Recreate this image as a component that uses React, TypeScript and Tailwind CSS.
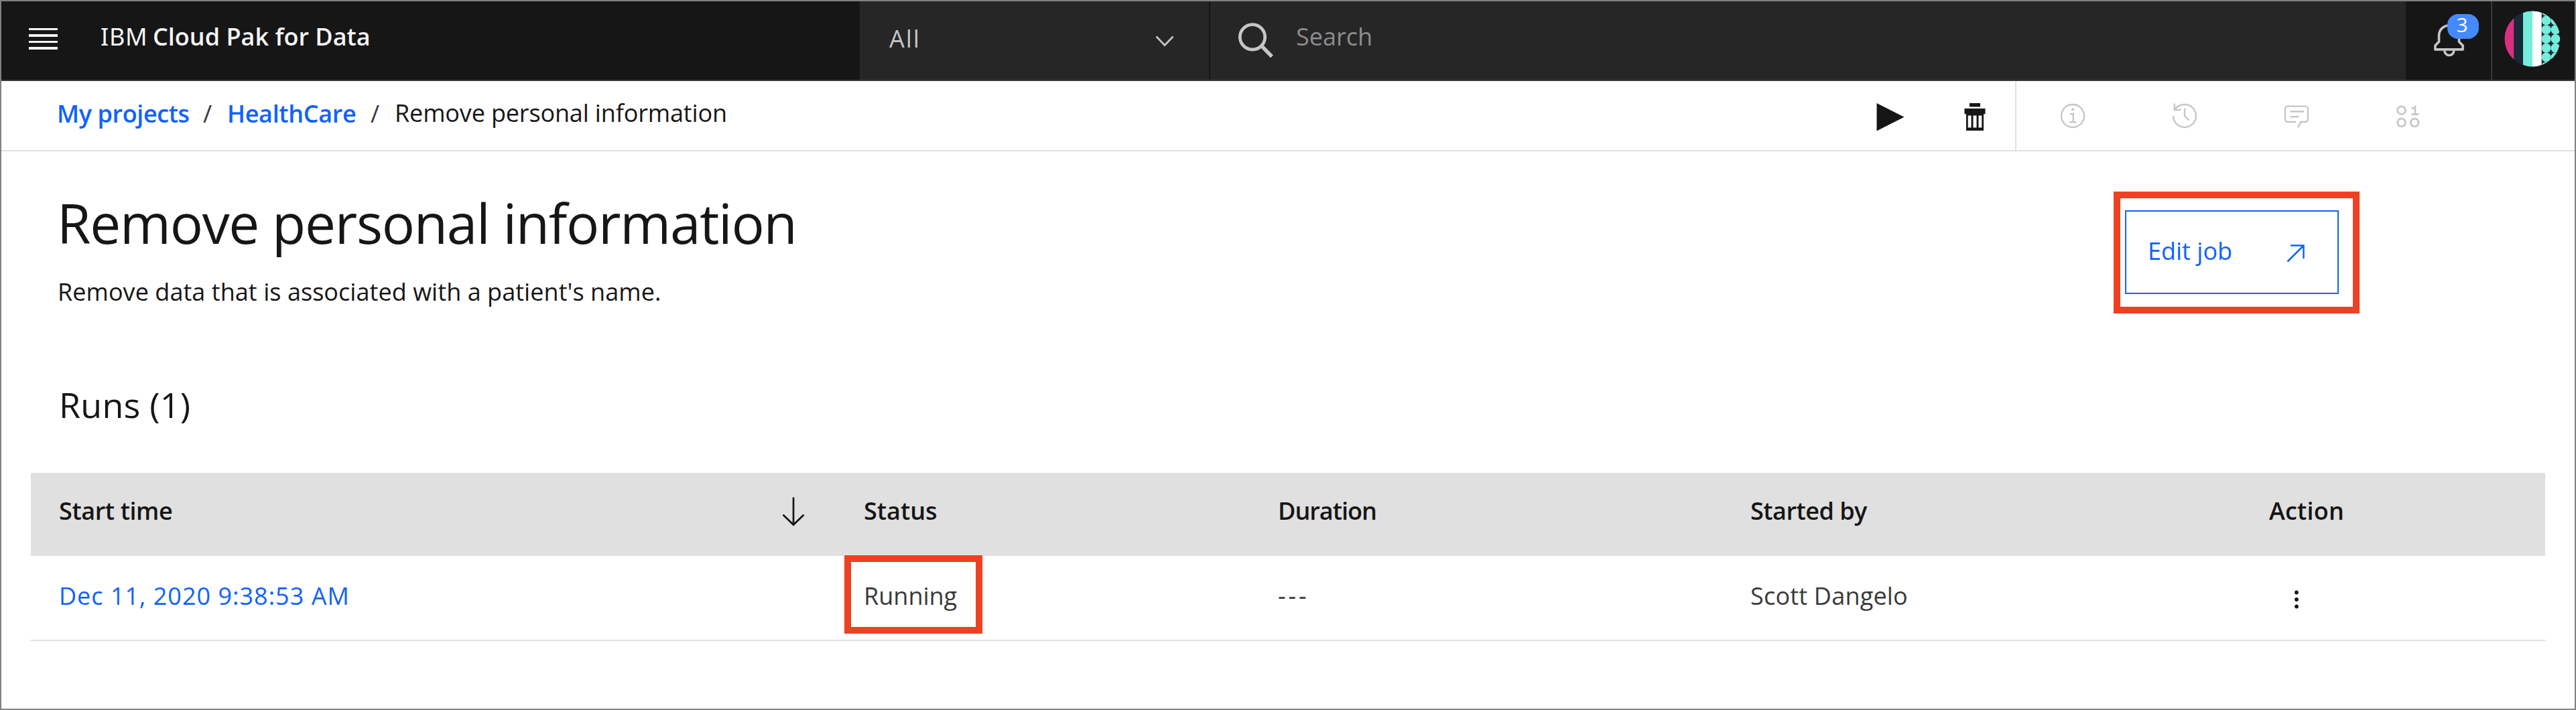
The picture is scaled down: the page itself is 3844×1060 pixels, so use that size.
import React from 'react';

function SearchIcon() {
  return (
    <svg width="56" height="56" viewBox="0 0 56 56" fill="none" stroke="#c6c6c6" className="shrink-0">
      <circle cx="25" cy="25.3" r="18.7" strokeWidth="4.8" />
      <path d="M39 39l15 15.5" strokeWidth="5.4" />
    </svg>
  );
}

function BellIcon() {
  return (
    <svg width="46" height="50" viewBox="0 0 46 50" fill="none" stroke="#c6c6c6" strokeWidth="3.6">
      <path d="M1.9 37.9V32l5.6-5.8v-9.2a15 15 0 0 1 30 0v9.2l5.6 5.8v5.9z" strokeLinejoin="round" />
      <path d="M15.8 39.5a7 7 0 0 0 14 0" />
    </svg>
  );
}

function Avatar() {
  const rows = [-41.2, -27.4, -13.7, 0, 13.7, 27.4, 41.2];
  return (
    <svg width="84" height="84" viewBox="-42 -42 84 84">
      <clipPath id="avatar">
        <circle r="41.5" />
      </clipPath>
      <g clipPath="url(#avatar)">
        <rect x="-42" y="-42" width="84" height="84" fill="#182a38" />
        <rect x="-42" y="-42" width="14.2" height="84" fill="#da2f80" />
        <rect x="-14" y="-42" width="14" height="84" fill="#76eddb" />
        <rect x="0" y="-42" width="13.7" height="84" fill="#fff" />
        {rows.map((y) => (
          <g key={y} fill="#76eddb">
            <circle cx="20.6" cy={y} r="7" />
            <circle cx="34.4" cy={y} r="7" />
          </g>
        ))}
      </g>
    </svg>
  );
}

function TrashIcon() {
  return (
    <svg width="32" height="42" viewBox="0 0 32 42" fill="#161616">
      <path d="M8 0h16v5.5H8zM.5 8h31v8.300h-31z" />
      <path fillRule="evenodd" d="M3 16h26v25H3zM5.700 18.500v18h4.800v-18zM13.500 18.500v18h5v-18zM21.500 18.500v18h4.800v-18z" />
    </svg>
  );
}

const toolIcon = { width: 40, height: 40, viewBox: '0 0 40 40', fill: 'none', stroke: '#c6c6c6', strokeWidth: 2.4 };

function InfoIcon() {
  return (
    <svg {...toolIcon}>
      <circle cx="20" cy="20" r="17" />
      <circle cx="20" cy="10.500" r="2.100" fill="#c6c6c6" stroke="none" />
      <path d="M16 17h4.800v12M15 29.200h10.200" />
    </svg>
  );
}

function HistoryIcon() {
  return (
    <svg {...toolIcon}>
      <path d="M3 20a17 17 0 1 0 17-17C13.500 3 8 6 5 11M4.700 1.500V11h9.800M20 8.500V20l6.500 6.500" />
    </svg>
  );
}

function CommentIcon() {
  return (
    <svg {...toolIcon}>
      <path d="M19 29H7a4 4 0 0 1-4-4V9.600a4 4 0 0 1 4-4h26a4 4 0 0 1 4 4V25a4 4 0 0 1-4 4h-6.500L22 37.300M10.500 13.500h20.500M10.500 21.200h13" />
    </svg>
  );
}

function DataIcon() {
  return (
    <svg {...toolIcon} strokeWidth="2.700">
      <circle cx="9.500" cy="11.700" r="5.900" />
      <circle cx="9.500" cy="30" r="5.900" />
      <circle cx="29.200" cy="30" r="5.900" />
      <path d="M24.500 8.500h5.500M30 4.500v13.500M24.500 17.700h11" />
    </svg>
  );
}

export default function App() {
  return (
    <div className="flex h-[1060px] w-[3844px] flex-col border-2 border-[#808080] bg-white font-['Open_Sans','Noto_Sans',sans-serif] text-[36px] leading-none whitespace-nowrap text-[#161616]">
      <header className="flex h-[119px] shrink-0 border-b-2 border-[#393939] bg-[#161616]">
        <div className="flex w-[1281px] items-center pb-[11px] pl-[41px]">
          <div className="mt-[5px] flex w-[43px] flex-col gap-[6px]">
            <div className="h-[3.5px] bg-[#f4f4f4]" />
            <div className="h-[3.5px] bg-[#f4f4f4]" />
            <div className="h-[3.5px] bg-[#f4f4f4]" />
            <div className="h-[3.5px] bg-[#f4f4f4]" />
          </div>
          <div className="ml-[64px] flex text-[#f4f4f4]">
            <span className="w-[78px] font-['Noto_Sans',sans-serif] tracking-[0.7px]">IBM</span>
            <span className="font-semibold">Cloud Pak for Data</span>
          </div>
        </div>
        <div className="flex w-[521px] items-center justify-between bg-[#262626] pr-[52px] pb-[5px] pl-[44px] text-[#c6c6c6]">
          <span className="tracking-[2px]">All</span>
          <svg width="28" height="18" viewBox="0 0 28 18" fill="none" stroke="#c6c6c6" strokeWidth="2.7" className="mt-[8px]">
            <path d="M1.500 1.500L14 14.500L26.500 1.500" />
          </svg>
        </div>
        <div className="flex w-[1786px] items-center border-l-2 border-[#161616] bg-[#262626] pb-[11px] pl-[38px]">
          <div className="mt-[6px] flex">
            <SearchIcon />
          </div>
          <span className="ml-[34px] text-[#8d8d8d]">Search</span>
        </div>
        <div className="relative flex w-[127px] items-center justify-center">
          <div className="mr-[-2px] flex">
            <BellIcon />
          </div>
          <div className="absolute top-[19px] left-[62px] flex h-[37px] w-[47px] items-center justify-center rounded-[16px] bg-[#4589ff] pr-[3px] pb-[5px] text-[30px] text-white">
            3
          </div>
        </div>
        <div className="flex flex-1 items-center border-l-2 border-[#393939] pb-[5px] pl-[18px]">
          <Avatar />
        </div>
      </header>

      <nav className="flex h-[105px] shrink-0 justify-between border-b-2 border-[#e0e0e0]">
        <div className="flex items-center pb-[5px] pl-[83px]">
          <a className="w-[218px] font-semibold tracking-[-0.4px] text-[#0f62fe]">My projects</a>
          <span className="w-[36px] text-[#393939]">/</span>
          <a className="w-[214px] font-semibold tracking-[-0.35px] text-[#0f62fe]">HealthCare</a>
          <span className="w-[36px] text-[#393939]">/</span>
          <span className="pb-[2px] tracking-[-0.15px]">Remove personal information</span>
        </div>
        <div className="flex">
          <div className="flex items-center gap-[89px] border-r-2 border-[#e0e0e0] pt-[5px] pr-[44px]">
            <svg width="42" height="42" viewBox="0 0 42 42" fill="#161616">
              <path d="M.5 0L41.500 20.700L.5 41.500z" />
            </svg>
            <TrashIcon />
          </div>
          <div className="flex w-[833px] items-center gap-[127px] pt-px pl-[64px]">
            <InfoIcon />
            <HistoryIcon />
            <CommentIcon />
            <DataIcon />
          </div>
        </div>
      </nav>

      <main>
        <div className="flex items-start justify-between pr-[321px] pl-[83px]">
          <div className="pt-[65px]">
            <h1 className="text-[82px] leading-none tracking-[-1.3px]">Remove personal information</h1>
            <p className="mt-[45px] pl-px tracking-[0.05px]">Remove data that is associated with a patient's name.</p>
          </div>
          <div className="mt-[60px] h-[182px] w-[367px] border-10 border-[#ee4023] pt-[18px] pl-[7px]">
            <button className="flex h-[125px] w-[319px] items-center justify-between border-2 border-[#0f62fe] pr-[48px] pb-[4px] pl-[32px] leading-none text-[#0f62fe]">
              Edit job
              <svg width="28" height="28" viewBox="0 0 28 28" fill="none" stroke="#0f62fe" strokeWidth="2.5" className="mt-[6px]">
                <path d="M6 2.500h19.500V22M25.500 2.500L1.500 26.500" />
              </svg>
            </button>
          </div>
        </div>

        <h2 className="mt-[110px] pl-[86px] text-[52px] leading-none tracking-[0.2px]">Runs (1)</h2>

        <section className="mt-[76px] ml-[44px] w-[3752px]">
          <div className="grid h-[124px] grid-cols-[1243px_618px_705px_774px_412px] items-center bg-[#e0e0e0] font-semibold">
            <div className="flex items-center justify-between pr-[88px] pl-[42px]">
              <span className="pb-[10px] tracking-[-0.4px]">Start time</span>
              <svg width="34" height="44" viewBox="0 0 34 44" fill="none" stroke="#161616" strokeWidth="2.7" className="mb-[9px]">
                <path d="M17 .5V41M1.500 26.500L17 41.500L32.500 26.500" />
              </svg>
            </div>
            <span className="pb-[10px]">Status</span>
            <span className="pb-[10px] tracking-[-1px]">Duration</span>
            <span className="pb-[10px] tracking-[-0.5px]">Started by</span>
            <span className="pb-[10px] tracking-[0.2px]">Action</span>
          </div>
          <div className="grid h-[127px] grid-cols-[1243px_618px_705px_774px_412px] items-center border-b-2 border-[#e0e0e0] text-[#393939]">
            <a className="pb-[5px] pl-[42px] tracking-[1px] text-[#0f62fe]">Dec 11, 2020 9:38:53 AM</a>
            <div className="relative pb-[5px]">
              Running
              <div className="absolute top-[-43px] left-[-29px] h-[117px] w-[206px] border-10 border-[#ee4023]" />
            </div>
            <span className="pb-[5px] font-medium tracking-[3.9px]">---</span>
            <span className="pb-[5px] tracking-[0.2px]">Scott Dangelo</span>
            <svg width="8" height="28" viewBox="0 0 8 28" fill="#161616" className="mt-[5px] ml-[37px]">
              <circle cx="4" cy="3.500" r="2.900" />
              <circle cx="4" cy="14" r="2.900" />
              <circle cx="4" cy="24.500" r="2.900" />
            </svg>
          </div>
        </section>
      </main>
    </div>
  );
}
